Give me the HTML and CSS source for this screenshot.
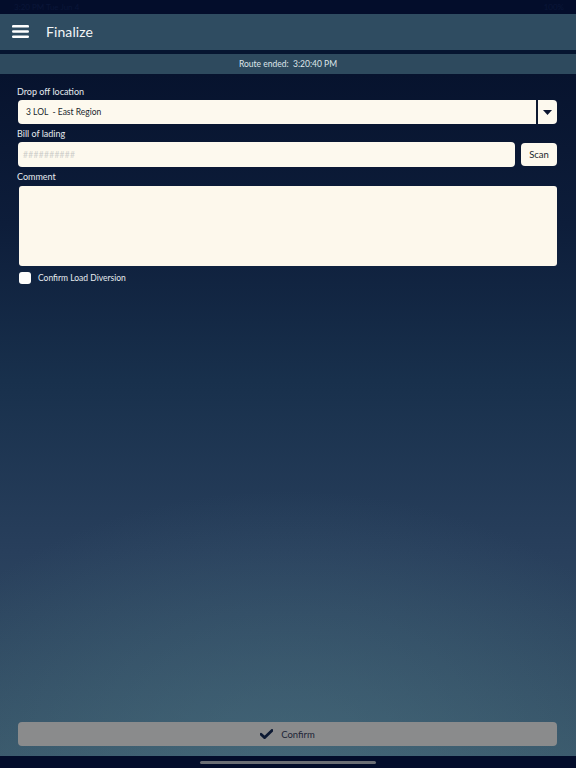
FILE: index.html
```html
<!DOCTYPE html>
<html>
<head>
<meta charset="utf-8">
<link rel="stylesheet" href="styles.css">
</head>
<body>
<div class="screen">
  <div class="statusbar"><span class="st-left">3:20 PM  Tue Jun 4</span><span class="st-right">100%</span></div>
  <header class="appbar">
    <svg class="menu" width="17" height="13" viewBox="0 0 17 13"><rect x="0" y="0" width="17" height="2.6" rx="1.2" fill="#fff"/><rect x="0" y="5.2" width="17" height="2.6" rx="1.2" fill="#fff"/><rect x="0" y="10.4" width="17" height="2.6" rx="1.2" fill="#fff"/></svg>
    <span class="title">Finalize</span>
  </header>
  <div class="sep"></div>
  <div class="routebar">Route ended:&nbsp; 3:20:40 PM</div>
  <main class="content">
    <label class="lbl">Drop off location</label>
    <div class="select">
      <span class="sel-text">3 LOL&nbsp; - East Region</span>
      <span class="sel-div"></span>
      <span class="sel-arrow"><svg width="9" height="5" viewBox="0 0 9 5"><path d="M0 0 H9 L4.5 5 Z" fill="#0b1530"/></svg></span>
    </div>
    <label class="lbl">Bill of lading</label>
    <div class="row">
      <div class="input">##########</div>
      <div class="scan">Scan</div>
    </div>
    <label class="lbl">Comment</label>
    <div class="textarea"></div>
    <div class="check-row">
      <span class="checkbox"></span>
      <span class="check-lbl">Confirm Load Diversion</span>
    </div>
    <div class="spacer"></div>
    <div class="confirm">
      <svg width="13" height="10" viewBox="0 0 13 10"><path d="M1 5.2 L4.7 8.6 L12 1.4" stroke="#0d1a33" stroke-width="2.8" fill="none" stroke-linecap="round" stroke-linejoin="round"/></svg>
      <span>Confirm</span>
    </div>
  </main>
  <div class="homebar"><span class="indicator"></span></div>
</div>
</body>
</html>
```
FILE: styles.css
```css
* { box-sizing: border-box; }
html, body { margin: 0; padding: 0; }
body {
  width: 576px;
  height: 768px;
  overflow: hidden;
  font-family: "Lato", "Noto Sans", sans-serif;
  background: #030d2b;
}
.screen {
  width: 576px;
  height: 768px;
  display: flex;
  flex-direction: column;
}
.statusbar {
  height: 14px;
  background: #030d2b;
  display: flex;
  justify-content: space-between;
  align-items: center;
  padding: 0 12px 0 14px;
  font-size: 8px;
  color: #0a1638;
}
.appbar {
  height: 36px;
  background: #2f4c61;
  display: flex;
  align-items: center;
  padding-left: 12px;
  padding-bottom: 2px;
}
.menu { margin-right: 17px; margin-top: 1px; }
.title {
  color: #f2f5f7;
  font-size: 14px;
  letter-spacing: 0.1px;
}
.sep {
  height: 4px;
  background: #061530;
}
.routebar {
  height: 20px;
  background: #2e4a5e;
  color: #dfe6ea;
  font-size: 8.5px;
  display: flex;
  align-items: center;
  justify-content: center;
}
.content {
  flex: 1;
  display: flex;
  flex-direction: column;
  padding: 12px 19px 9px 18px;
  background:
    radial-gradient(ellipse 420px 300px at 50% 105%, rgba(80,120,135,0.5), rgba(80,120,135,0) 100%),
    linear-gradient(180deg, #07132e 0%, #0d1d3a 22%, #18304c 45%, #283f5c 70%, #385669 100%);
}
.lbl {
  color: #e6ebef;
  font-size: 9px;
  margin-left: -1px;
  line-height: 11px;
  height: 11px;
}
.select {
  margin-top: 3px;
  height: 24px;
  background: #fdf9ee;
  border-radius: 4px;
  display: flex;
  align-items: center;
  margin-bottom: 4px;
}
.sel-text {
  flex: 1;
  color: #1a1f2c;
  font-size: 8.5px;
  padding-left: 8px;
}
.sel-div {
  width: 2px;
  align-self: stretch;
  background: #0e1a30;
}
.sel-arrow {
  width: 19px;
  display: flex;
  justify-content: center;
  align-items: center;
}
.row {
  margin-top: 3px;
  display: flex;
  gap: 6px;
  height: 25px;
  margin-bottom: 4px;
}
.input {
  flex: 1;
  background: #fdf9ee;
  border-radius: 4px;
  color: #d0d0cc;
  font-size: 8.5px;
  display: flex;
  align-items: center;
  padding-left: 5px;
  letter-spacing: 0.3px;
}
.scan {
  width: 36px;
  margin: 1px 0;
  background: #fdf9ee;
  border-radius: 4px;
  color: #1a1f2c;
  font-size: 9.5px;
  display: flex;
  align-items: center;
  justify-content: center;
}
.textarea {
  margin-top: 4px;
  margin-left: 1px;
  height: 80px;
  background: #fdf8ec;
  border-radius: 3px;
}
.check-row {
  display: flex;
  align-items: center;
  margin-top: 6px;
  margin-left: 1px;
}
.checkbox {
  width: 12px;
  height: 12px;
  background: #fdfdfb;
  border-radius: 3px;
  margin-right: 7px;
}
.check-lbl {
  color: #e6ebef;
  font-size: 8.5px;
}
.spacer { flex: 1; }
.confirm {
  height: 24px;
  background: #8a8b8c;
  border-radius: 4px;
  display: flex;
  align-items: center;
  justify-content: center;
  gap: 8px;
  color: #1d2536;
  font-size: 9.5px;
  margin-bottom: 1px;
}
.homebar {
  height: 12px;
  background: #030d2b;
  display: flex;
  justify-content: center;
  align-items: center;
}
.indicator {
  width: 176px;
  height: 3px;
  border-radius: 2px;
  background: #6b6e75;
}
```
